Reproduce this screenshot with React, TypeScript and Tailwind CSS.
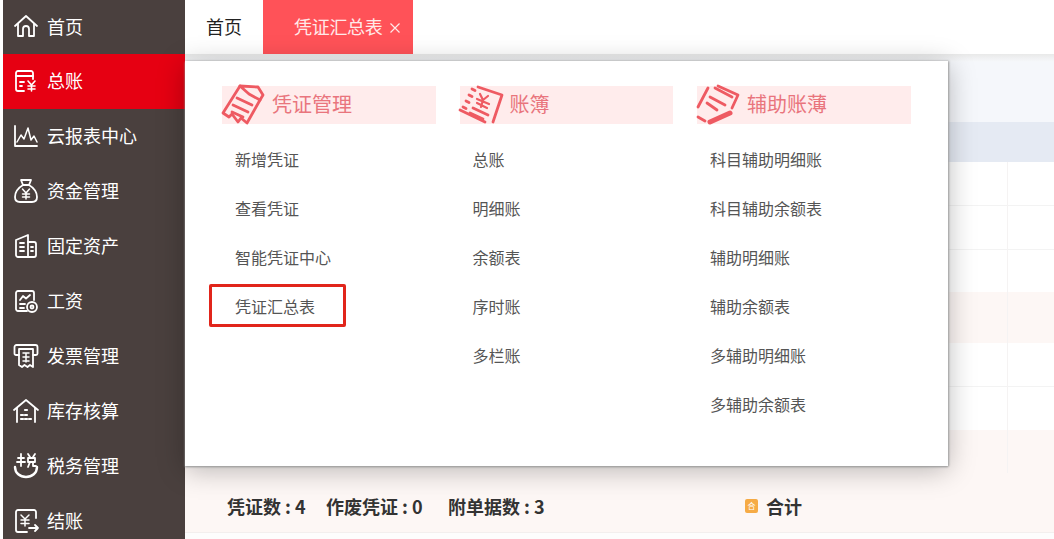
import React from "react";

const S = (p: { children: React.ReactNode }) => (
  <svg width="32" height="32" viewBox="0 0 32 32" fill="none" stroke="currentColor" strokeWidth="1.800" strokeLinecap="round" strokeLinejoin="round">
    {p.children}
  </svg>
);

const icons: Record<string, React.ReactNode> = {
  home: <><path d="M5 16 L16 6 L27 16" /><path d="M8 14 V26 H13 V19 a3 3 0 0 1 6 0 V26 H24 V14" /></>,
  ledger: <><path d="M23 14 V8 a2 2 0 0 0 -2 -2 H8 a2 2 0 0 0 -2 2 V24 a2 2 0 0 0 2 2 H14" /><path d="M6 11 H23" /><path d="M10 17 H14 M10 21 H12" /><path d="M18 16 L21.500 20 L25 16 M21.500 20 V26 M18 21 H25 M18 24 H25" strokeWidth="1.600" /></>,
  chart: <><path d="M5 6 V26 H27" /><path d="M7 22 L11 15 L14 19 L18 8 L21 20 L24 16 L27 22" strokeWidth="1.500" /></>,
  money: <><path d="M11 5 H21 L19 10 H13 Z" /><path d="M13 10 C8 13 5 18 5 22 C5 25 7 27 10 27 H22 C25 27 27 25 27 22 C27 18 24 13 19 10" /><path d="M12.500 14 L16 18 L19.500 14 M16 18 V24 M12.500 19 H19.500 M12.500 22 H19.500" strokeWidth="1.500" /></>,
  building: <><path d="M6 10 L18 5 V27 H8 a2 2 0 0 1 -2 -2 Z" /><path d="M18 12 H24 a2 2 0 0 1 2 2 V25 a2 2 0 0 1 -2 2 H18" /><path d="M10 13 H14 M10 17 H14 M10 21 H14 M21 17 H23 M21 21 H23" /></>,
  salary: <><path d="M17 26 H8 a2 2 0 0 1 -2 -2 V8 a2 2 0 0 1 2 -2 H22 a2 2 0 0 1 2 2 V15" /><path d="M10 15 L13 11 L16 13.500 L20 10" /><path d="M10 19 H15 M10 23 H14" /><circle cx="22" cy="22" r="5" /><circle cx="22" cy="22" r="1.500" /></>,
  invoice: <><path d="M9 15 H6 a1.500 1.500 0 0 1 -1.500 -1.500 V7 a2 2 0 0 1 2 -2 H25.500 a2 2 0 0 1 2 2 V13.500 a1.500 1.500 0 0 1 -1.500 1.500 H23" /><path d="M9 9 H23 V27 L20 25 L17.500 27 L14.500 25 L12 27 L9 25 Z" /><path d="M13 13 H19 M13 17 H19 M16 13 V22 M13 21 H19" strokeWidth="1.500" /></>,
  stock: <><path d="M4 15 L16 5 L28 15" /><path d="M7 13 V27 M25 13 V27" /><path d="M15 15 H17 M11 20 H13 M15 20 H17 M11 24 H13 M15 24 H17 M19 24 H21 " strokeWidth="2.200" /></>,
  tax: <><path d="M5 17 C5 23 10 27 16 27 C22 27 27 23 27 17" strokeWidth="2.400" /><path d="M8 8 H14 M11 4 V16 M7 12 H15 M18 4 L20 7 M25 4 L23 7 M18 8 H25 V12 H18 Z M20 12 L18 17 M23 12 V16 H26" strokeWidth="1.800" /></>,
  close: <><path d="M26 13 V7 a2 2 0 0 0 -2 -2 H8 a2 2 0 0 0 -2 2 V25 a2 2 0 0 0 2 2 H17" /><path d="M11 10 L15 14 L19 10 M15 14 V21 M11 15 H19 M11 18.500 H19" strokeWidth="1.500" /><path d="M19 23 H28 M25 20 L28 23 L25 26" /></>,
};

const nav = [
  ["home", "首页", "h-[54px]"],
  ["ledger", "总账", "h-[55px] bg-[#e60012]"],
  ["chart", "云报表中心", "h-[55px]"],
  ["money", "资金管理", "h-[55px]"],
  ["building", "固定资产", "h-[55px]"],
  ["salary", "工资", "h-[55px]"],
  ["invoice", "发票管理", "h-[55px]"],
  ["stock", "库存核算", "h-[55px]"],
  ["tax", "税务管理", "h-[55px]"],
  ["close", "结账", "h-[55px]"],
];

const FONT = "font-['Noto_Sans_CJK_SC','Noto_Sans',sans-serif]";

const iconCls = "absolute left-[-2px] top-[-2px]";

function VoucherIcon() {
  return (
    <svg width="48" height="42" viewBox="0 0 48 42" fill="none" stroke="#ee5a62" strokeWidth="2.800" strokeLinejoin="round" strokeLinecap="round" className={iconCls}>
      <path d="M20 2 L3 29 L9 33 L12 30 L18 38 L21 34 L27 39 L40 16" />
      <path d="M20 2 L38 3 L43 11 L40 16 L29 10 Z" />
      <path d="M17 14 L32 21 M13 21 L28 28 M12 28 L23 33" />
    </svg>
  );
}

function BookIcon() {
  return (
    <svg width="48" height="42" viewBox="0 0 48 42" fill="none" stroke="#ee5a62" strokeWidth="2.800" strokeLinejoin="round" strokeLinecap="round" className={iconCls}>
      <path d="M20 3 L44 11 L35 38 M27 38 L2 26" />
      <path d="M14 5 L17 6.500 M11 11 L14 12.500 M8 17 L11 18.500 M5 23 L8 24.500" />
      <path d="M22 10 L25 16 L30 12 M25 16 L23 23 M19 15 L31 20 M19 19 L29 24" strokeWidth="2.200" />
      <path d="M15 24 L30 31 M12 29 L25 35" />
    </svg>
  );
}

function NotesIcon() {
  return (
    <svg width="48" height="42" viewBox="0 0 48 42" fill="none" stroke="#ee5a62" strokeWidth="2.800" strokeLinejoin="round" strokeLinecap="round" className={iconCls}>
      <path d="M23 2 L43 11 L37 24" />
      <path d="M13 4 L3 23 M3 33 L10 37" />
      <path d="M20 4 L37 13 M15 13 L30 21 M12 19 L22 26" />
      <path d="M15 38 L35 29" strokeWidth="5" />
    </svg>
  );
}

const cols: { title: string; icon: React.ReactNode; items: string[] }[] = [
  { title: "凭证管理", icon: <VoucherIcon />, items: ["新增凭证", "查看凭证", "智能凭证中心", "凭证汇总表"] },
  { title: "账簿", icon: <BookIcon />, items: ["总账", "明细账", "余额表", "序时账", "多栏账"] },
  { title: "辅助账薄", icon: <NotesIcon />, items: ["科目辅助明细账", "科目辅助余额表", "辅助明细账", "辅助余额表", "多辅助明细账", "多辅助余额表"] },
];

export default function App() {
  return (
    <div className={`${FONT} relative flex h-[539px] w-[1054px] overflow-hidden bg-white pl-[3px]`}>
      <aside className="flex h-full w-[182px] shrink-0 flex-col bg-[#4a403e] text-white">
        {nav.map(([ic, label, cls]) => (
          <div key={label} className={`flex shrink-0 items-center pb-[2px] pl-[7px] ${cls}`}>
            <span className="flex w-[37px] shrink-0 items-center">
              <S>{icons[ic]}</S>
            </span>
            <span className="pb-[1px] text-[18px] leading-none">{label}</span>
          </div>
        ))}
      </aside>

      <main className="relative flex min-w-0 flex-1 flex-col bg-white">
        <div className="flex h-[54px] shrink-0 items-stretch">
          <div className="flex w-[78px] items-center justify-center pb-[2px] text-[18px] text-[#222]">首页</div>
          <div className="flex w-[150px] items-center bg-[#ff5258] pb-[2px] pl-[31px] text-[18px] text-[#ffe9e9]">
            <span className="tracking-[-0.3px]">凭证汇总表</span>
            <svg width="12" height="12" viewBox="0 0 12 12" className="ml-[6px] mt-[3px]" stroke="#ffe9e9" strokeWidth="1.200" fill="none">
              <path d="M1.500 1.500 L10.500 10.500 M10.500 1.500 L1.500 10.500" />
            </svg>
          </div>
        </div>

        <div className="flex h-[8px] shrink-0 bg-gradient-to-b from-[#e9e9e9] to-[#f6f8fb]" />
        <div className="h-[60px] shrink-0 bg-[#f5f7fb]" />
        <div className="h-[40px] shrink-0 bg-[#e5eaf3]" />
        <div className="flex flex-1 flex-col">
          <div className="h-[44px] border-b border-[#f3f3f3]" />
          <div className="h-[44px] border-b border-[#f3f3f3]" />
          <div className="h-[42px]" />
          <div className="h-[51px] bg-[#fdf7f5]" />
          <div className="h-[44px] border-b border-[#f3f3f3]" />
          <div className="h-[43px]" />
          <div className="flex h-[103px] items-center border-b border-[#f3efee] bg-[#fdf7f5] pl-[42px] pt-[50px] text-[18px] font-bold text-[#333]">
            <span className="w-[99px]">凭证数 : 4</span>
            <span className="w-[122px]">作废凭证 : 0</span>
            <span className="w-[297px]">附单据数 : 3</span>
            <span className="mr-[8px] flex h-[14px] w-[13px] items-center justify-center rounded-[2px] bg-[#f6ab45] text-[8px] font-normal leading-none text-white">合</span>
            <span>合计</span>
          </div>
          <div className="flex-1 bg-[#fdfdfd]" />
        </div>
        <span className="absolute left-[822px] top-[162px] h-[311px] w-px bg-[#f5f3f3]" />
      </main>

      <section className="absolute left-[185px] top-[61px] flex h-[405px] w-[763px] gap-[24px] bg-white pl-[37px] pt-[25px] shadow-[0_1px_2px_#999,1px_0_2px_#aaa,0_4px_26px_rgba(0,0,0,0.28)]">
        {cols.map((c) => (
          <div key={c.title} className="w-[213.500px] shrink-0">
            <div className="relative flex h-[38px] items-center bg-[#ffecec] pb-[2px] pl-[50px] text-[20px] text-[#e9757d]">
              {c.icon}
              <span>{c.title}</span>
            </div>
            <ul className="mt-[10px] pl-[13px] text-[16px] text-[#555]">
              {c.items.map((it) => (
                <li key={it} className="relative flex h-[49px] items-center">
                  {it}
                  {it === "凭证汇总表" && (
                    <span className="absolute left-[-26px] top-[3px] h-[43px] w-[137px] rounded-[2px] border-[3px] border-[#e1251b]" />
                  )}
                </li>
              ))}
            </ul>
          </div>
        ))}
      </section>
    </div>
  );
}
